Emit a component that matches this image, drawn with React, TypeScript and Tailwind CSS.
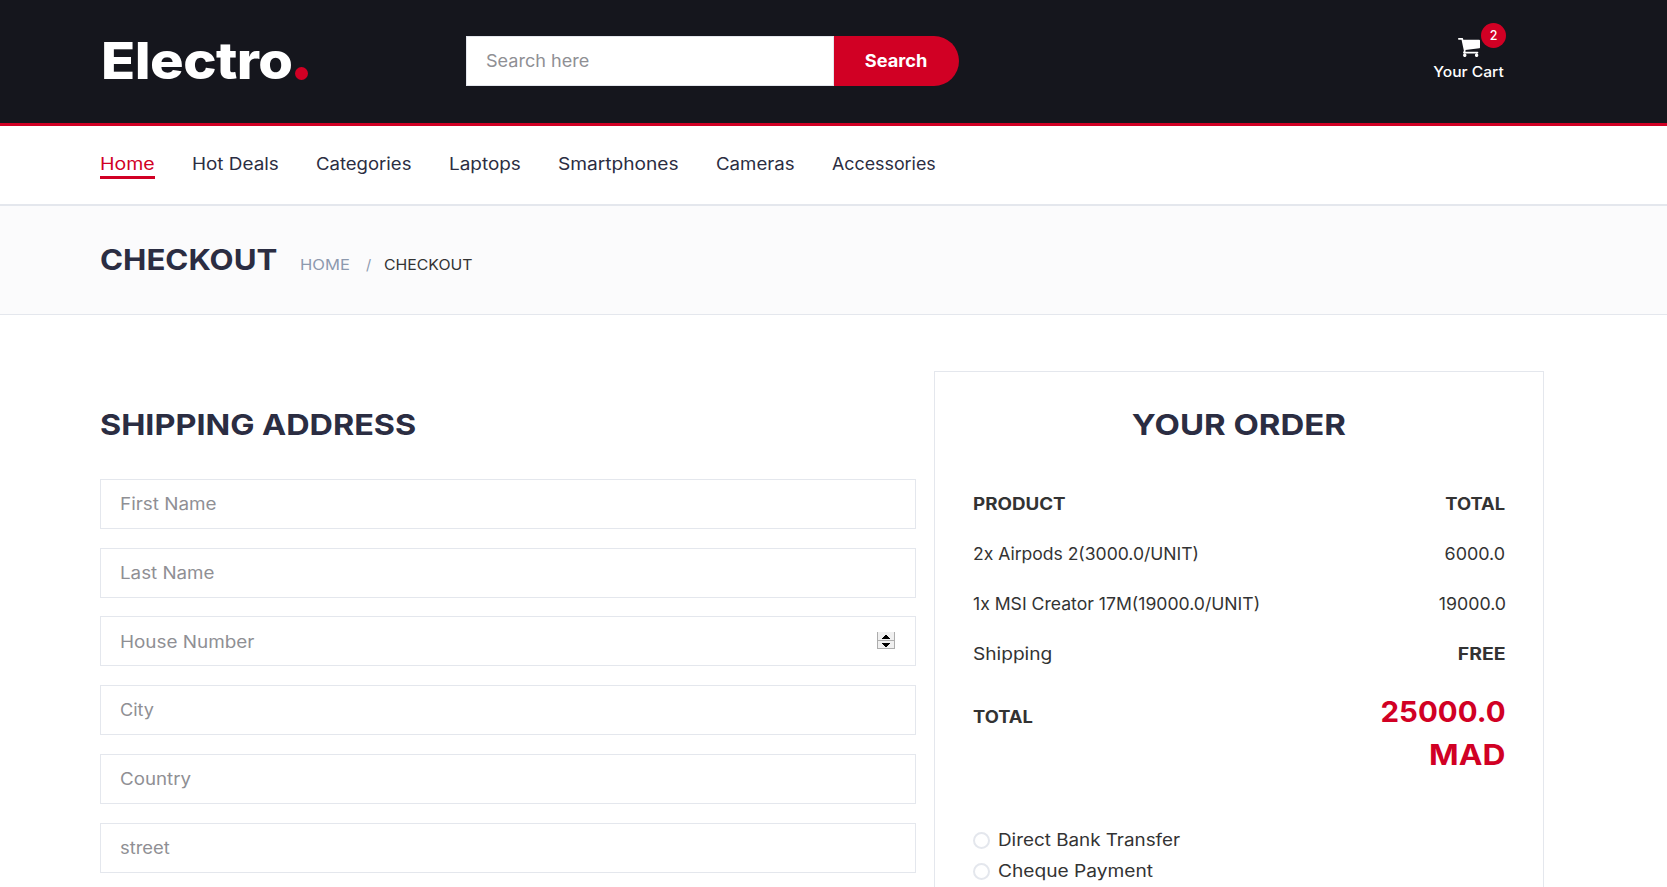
const NAV = [
  { label: "Home", item: "w-[55px]", scale: "scale-x-[1.155]" },
  { label: "Hot Deals", item: "w-[86px]", scale: "scale-x-[1.118]" },
  { label: "Categories", item: "w-[96px]", scale: "scale-x-[1.097]" },
  { label: "Laptops", item: "w-[71px]", scale: "scale-x-[1.12]" },
  { label: "Smartphones", item: "w-[121px]", scale: "scale-x-[1.133]" },
  { label: "Cameras", item: "w-[78px]", scale: "scale-x-[1.103]" },
  { label: "Accessories", item: "w-[104px]", scale: "scale-x-[1.056]" },
];

const FIELDS = [
  { label: "First Name", scale: "scale-x-[1.116]" },
  { label: "Last Name", scale: "scale-x-[1.11]" },
  { label: "House Number", scale: "scale-x-[1.118]", stepper: true },
  { label: "City", scale: "scale-x-[1.07]" },
  { label: "Country", scale: "scale-x-[1.108]" },
  { label: "street", scale: "scale-x-[1.09]" },
];

const ROWS = [
  { name: "PRODUCT", value: "TOTAL", ns: "scale-x-[1.11] font-bold", vs: "scale-x-[1.085] font-bold" },
  { name: "2x Airpods 2(3000.0/UNIT)", value: "6000.0", ns: "scale-x-[1.038]", vs: "scale-x-[1.06]" },
  { name: "1x MSI Creator 17M(19000.0/UNIT)", value: "19000.0", ns: "scale-x-[1.042]", vs: "scale-x-[1.05]" },
  { name: "Shipping", value: "FREE", ns: "scale-x-[1.132]", vs: "scale-x-[1.15] font-bold" },
];

const PAYMENTS = [
  { label: "Direct Bank Transfer", scale: "scale-x-[1.115]" },
  { label: "Cheque Payment", scale: "scale-x-[1.133]" },
];

function Stepper() {
  return (
    <svg className="mb-[3px]" width="18" height="17" viewBox="0 0 18 17" shapeRendering="crispEdges">
      <rect width="18" height="17" fill="#f0f0f0" />
      <path d="M0 0h1v17H0zM17 0h1v17h-1zM0 8h18v1H0zM0 16h18v1H0z" fill="#adadad" />
      <path d="M8 3h2v1h1v1h1v1h1v1H5V6h1V5h1V4h1zM5 11h8v1h-1v1h-1v1h-1v1H8v-1H7v-1H6v-1H5z" fill="#000" />
    </svg>
  );
}

function CartIcon() {
  return (
    <svg className="mt-[2px]" width="22" height="19" viewBox="0 256 1664 1408" preserveAspectRatio="none" fill="currentColor">
      <path d="M640 1536q0 52-38 90t-90 38-90-38-38-90 38-90 90-38 90 38 38 90zm896 0q0 52-38 90t-90 38-90-38-38-90 38-90 90-38 90 38 38 90zm128-1088v512q0 24-16.5 42.5t-40.5 21.5l-1044 122q13 60 13 70 0 16-24 64h920q26 0 45 19t19 45-19 45-45 19h-1024q-26 0-45-19t-19-45q0-11 8-31.5t16-36 21.5-40 15.5-29.5l-177-823h-204q-26 0-45-19t-19-45 19-45 45-19h256q16 0 28.5 6.5t19.5 15.5 13 24.5 8 26 5.5 29.5 4.5 26h1201q26 0 45 19t19 45z" />
    </svg>
  );
}

export default function App() {
  return (
    <div className="h-[887px] overflow-hidden bg-white font-['Inter',sans-serif] text-[16.9px] text-[#333]">
      <header className="flex h-[126px] items-start border-b-[3px] border-[#d10024] bg-[#15161d] pl-[100.5px]">
        <div className="mt-[36px] flex h-[50px] w-[365.5px] items-center">
          <span className="inline-block w-[194px] origin-left scale-x-[1.1] text-[51px] leading-[50px] font-extrabold tracking-[-0.5px] whitespace-nowrap text-white">
            Electro
          </span>
          <span className="mt-[24px] h-[13px] w-[13px] rounded-full bg-[#d10024]" />
        </div>
        <form className="mt-[36px] flex h-[50px]">
          <div className="flex h-[50px] w-[368px] items-center border border-[#e4e7ed] bg-white px-[18.5px] pt-[2px]">
            <input
              placeholder="Search here"
              className="w-[300px] origin-left scale-x-[1.07] outline-none placeholder:text-[#8f8f94]"
            />
          </div>
          <button
            type="button"
            className="flex h-[50px] w-[125px] items-center justify-center rounded-r-full bg-[#d10024] pt-[1px] font-bold text-white"
          >
            <span className="inline-block scale-x-[1.078]">Search</span>
          </button>
        </form>
        <div className="relative mt-[36px] ml-[474px] flex w-[71px] flex-col items-center text-white">
          <CartIcon />
          <span className="mt-[5px] inline-block scale-x-[1.085] text-[14.4px] leading-[20px] font-medium whitespace-nowrap">
            Your Cart
          </span>
          <span className="absolute -top-[13px] left-[48px] flex h-[25px] w-[25px] items-center justify-center rounded-full bg-[#d10024] pt-[1px] text-[12.5px] font-medium">
            2
          </span>
        </div>
      </header>

      <nav className="flex h-[80px] gap-[37.5px] border-b-2 border-[#e4e7ed] pl-[100px] text-[#2b2d42]">
        {NAV.map((n, i) => (
          <a
            key={n.label}
            className={`mt-[23px] h-[30px] leading-[30px] whitespace-nowrap ${n.item} ${
              i === 0 ? "border-b-[3px] border-[#d10024] text-[#d10024]" : ""
            }`}
          >
            <span className={`-ml-[0.5px] inline-block origin-left ${n.scale}`}>{n.label}</span>
          </a>
        ))}
      </nav>

      <div className="flex h-[109px] border-b border-[#e4e7ed] bg-[#fbfbfc] pl-[100px] whitespace-nowrap">
        <h1 className="mt-[34px] h-[40px] w-[200px] text-[28.9px] leading-[40px] font-bold text-[#2b2d42]">
          <span className="inline-block origin-left scale-x-[1.08]">CHECKOUT</span>
        </h1>
        <div className="mt-[49px] flex h-[20px] text-[14.4px] leading-[20px] text-[#8d99ae]">
          <span className="w-[66px]">
            <span className="inline-block origin-left scale-x-[1.15]">HOME</span>
          </span>
          <span className="w-[17.5px]">/</span>
          <span className="inline-block origin-left scale-x-[1.098] text-[#333]">CHECKOUT</span>
        </div>
      </div>

      <main className="flex pt-[56px] pl-[100px]">
        <section className="w-[816px] pt-[34px]">
          <h2 className="h-[40px] text-[28.9px] leading-[40px] font-bold whitespace-nowrap text-[#2b2d42]">
            <span className="-ml-[0.5px] inline-block origin-left scale-x-[1.12]">SHIPPING ADDRESS</span>
          </h2>
          <div className="mt-[34px] flex flex-col gap-[18.73px]">
            {FIELDS.map((f) => (
              <div
                key={f.label}
                className="flex h-[50px] items-center justify-between border border-[#e4e7ed] pt-[2px] pr-[20px] pl-[18.5px]"
              >
                <input
                  placeholder={f.label}
                  className={`w-[600px] origin-left bg-transparent outline-none placeholder:text-[#8f8f94] ${f.scale}`}
                />
                {f.stepper && <Stepper />}
              </div>
            ))}
          </div>
        </section>

        <section className="ml-[18px] h-[640px] w-[610px] border border-[#e4e7ed] px-[37.5px] pt-[33px]">
          <h2 className="h-[40px] text-center text-[28.9px] leading-[40px] font-bold whitespace-nowrap text-[#2b2d42]">
            <span className="inline-block scale-x-[1.14]">YOUR ORDER</span>
          </h2>
          <div className="mt-[35px]">
            {ROWS.map((r) => (
              <div key={r.name} className="flex h-[50px] items-center justify-between whitespace-nowrap">
                <span className={`inline-block origin-left ${r.ns}`}>{r.name}</span>
                <span className={`inline-block origin-right ${r.vs}`}>{r.value}</span>
              </div>
            ))}
          </div>
          <div className="mt-[10px] flex items-start justify-between font-bold">
            <span className="mt-[12px] inline-block origin-left scale-x-[1.085] leading-[30px]">TOTAL</span>
            <span className="flex flex-col items-end text-[28.9px] leading-[43px] text-[#d10024]">
              <span className="inline-block origin-right scale-x-[1.02]">25000.0</span>
              <span className="inline-block origin-right scale-x-[1.1]">MAD</span>
            </span>
          </div>
          <div className="mt-[49px]">
            {PAYMENTS.map((p) => (
              <label key={p.label} className="flex h-[31px] items-center whitespace-nowrap">
                <span className="h-[17px] w-[17px] rounded-full border-2 border-[#e4e7ed]" />
                <span className={`ml-[8px] inline-block origin-left ${p.scale}`}>{p.label}</span>
              </label>
            ))}
          </div>
        </section>
      </main>
    </div>
  );
}
